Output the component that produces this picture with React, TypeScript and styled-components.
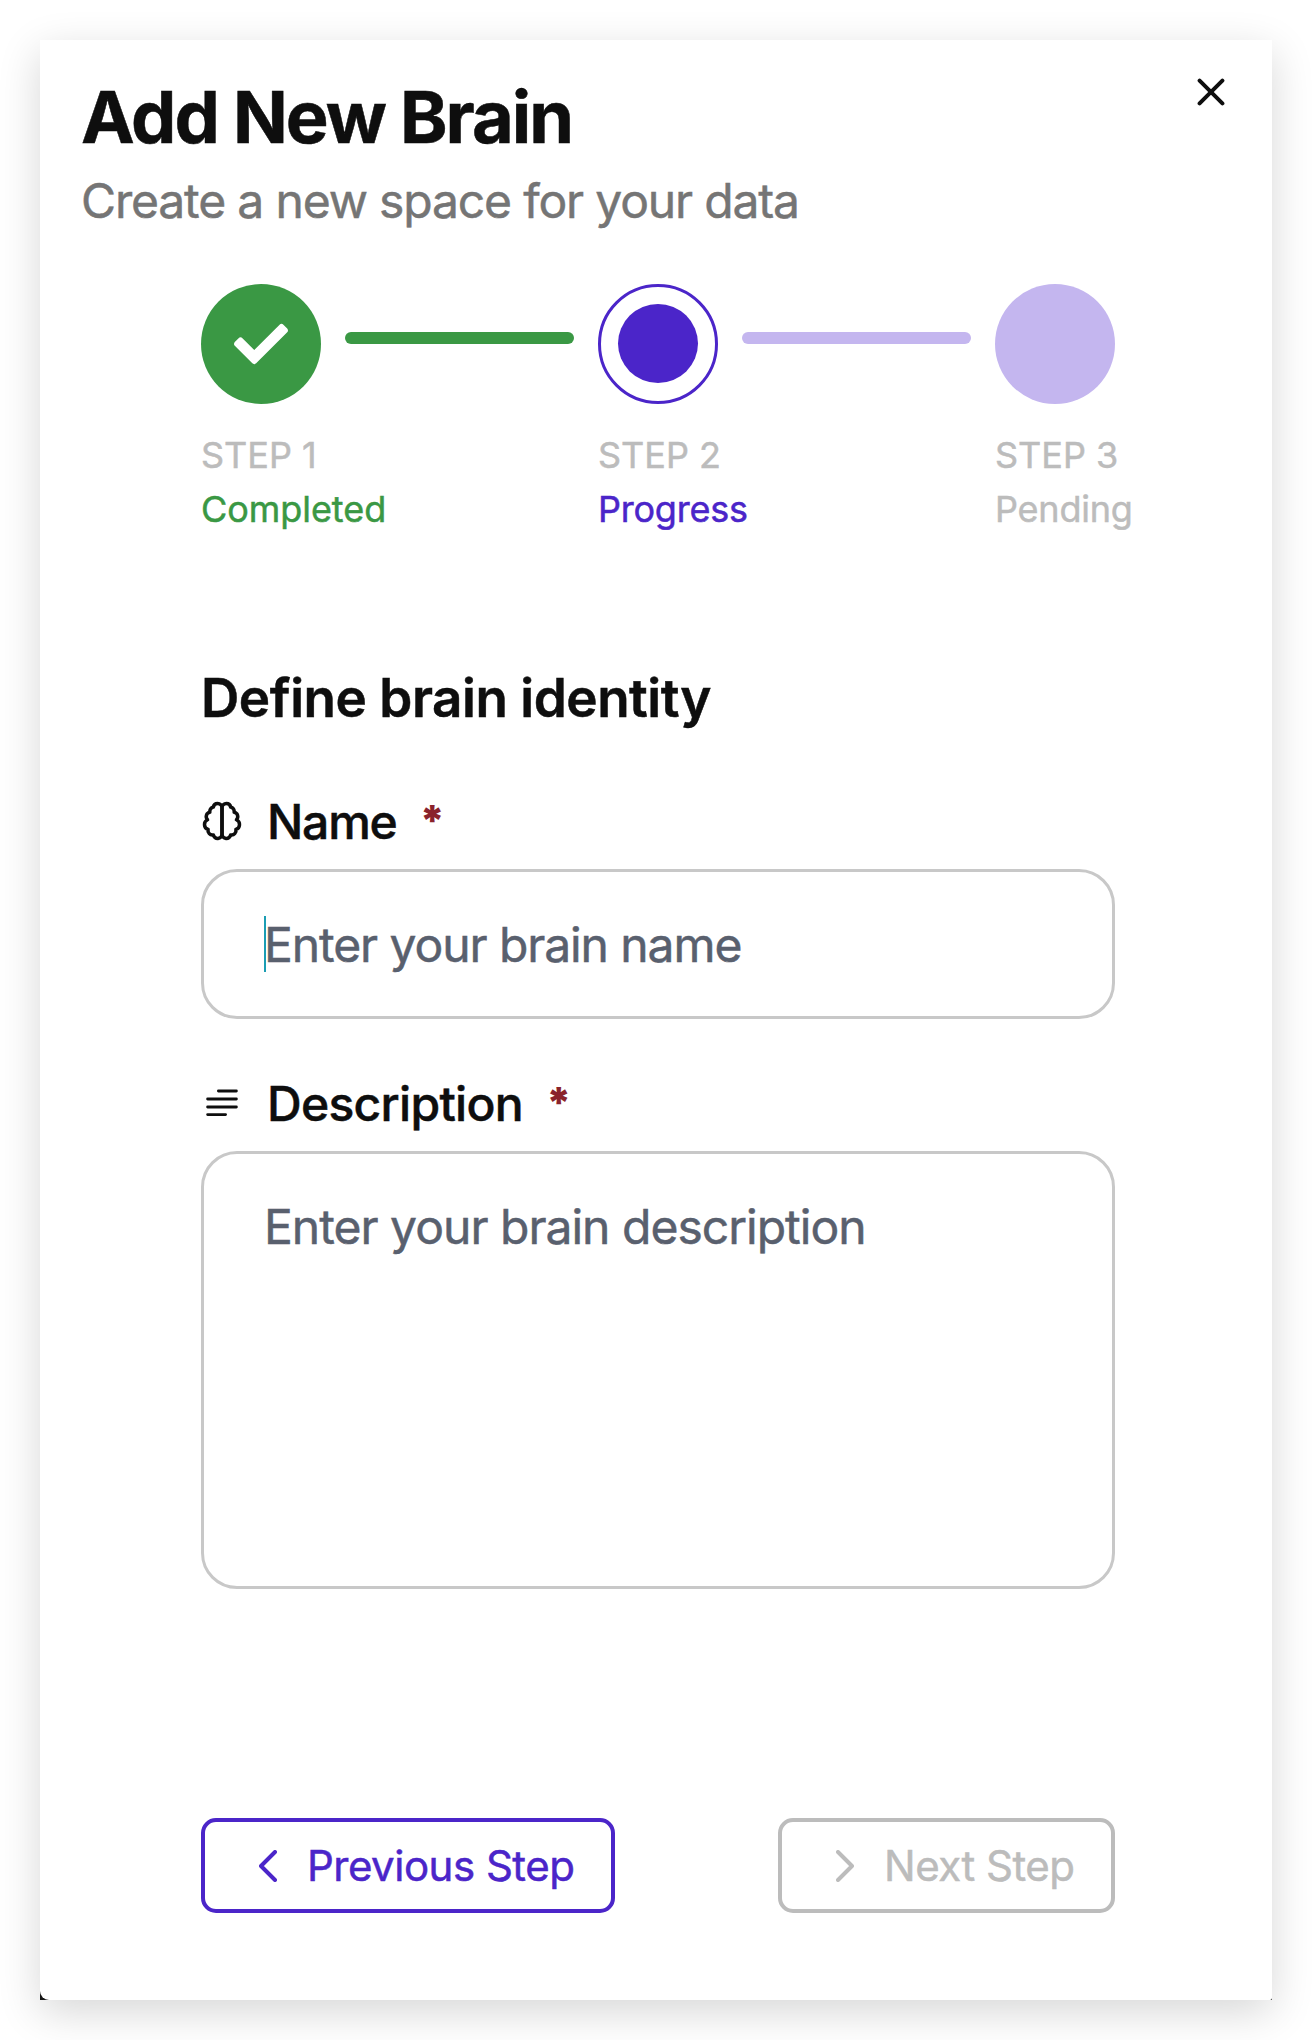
import React from "react";
import styled, { createGlobalStyle } from "styled-components";
import { FaCheck } from "react-icons/fa";

const color = {
  ink: "#0e0e0e",
  muted: "#757575",
  faint: "#bcbcbc",
  line: "#c8c8c8",
  placeholder: "#59606e",
  primary: "#4b25c9",
  primarySoft: "#c4b6ef",
  success: "#3a9844",
  danger: "#8a232c",
  caret: "#1b9db3",
};

const GlobalStyle = createGlobalStyle`
  *, *::before, *::after { box-sizing: border-box; }
  body { margin: 0; background: #fff; overflow: hidden; }
`;

const Page = styled.main`
  width: 1312px;
  height: 2040px;
  padding: 40px;
  overflow: hidden;
  font-family: Inter, "Liberation Sans", sans-serif;
  -webkit-text-stroke-width: 0.5px;
  color: ${color.ink};
`;

const Backdrop = styled.div`
  height: 1960px;
  background: #161616;
  box-shadow: 0 12px 40px rgba(0, 0, 0, 0.16);
`;

const Modal = styled.section`
  display: flex;
  flex-direction: column;
  height: 100%;
  padding-top: 41px;
  background: #fff;
  border-radius: 0 0 2px 9px;
`;

const Header = styled.header`
  display: flex;
  justify-content: space-between;
  align-items: flex-start;
  padding: 0 47px 0 41px;
`;

const Title = styled.h1`
  margin: 0;
  font-size: 72px;
  line-height: 72px;
  font-weight: 700;
  letter-spacing: -2px;
`;

const Subtitle = styled.p`
  margin: 20px 0 0;
  font-size: 48px;
  line-height: 56px;
  letter-spacing: -1.16px;
  color: ${color.muted};
`;

const CloseButton = styled.button`
  display: flex;
  margin: -3px 0 0;
  padding: 0;
  border: 0;
  background: none;
  color: inherit;
`;

const Body = styled.div`
  display: flex;
  flex-direction: column;
  width: 914px;
  margin: 55px 0 0 161px;
`;

const Stepper = styled.div`
  display: flex;
  align-items: flex-start;
`;

const Step = styled.div`
  width: 120px;
  white-space: nowrap;
  font-size: 36px;
  line-height: 54px;
`;

type Status = "done" | "current" | "pending";

const Circle = styled.div<{ $status: Status }>`
  display: flex;
  align-items: center;
  justify-content: center;
  width: 120px;
  height: 120px;
  margin-bottom: 24px;
  border-radius: 50%;
  border: ${(p) => (p.$status === "current" ? `3px solid ${color.primary}` : "0")};
  background: ${(p) =>
    p.$status === "done" ? color.success : p.$status === "pending" ? color.primarySoft : "#fff"};
  color: #fff;
`;

const Dot = styled.span`
  width: 80px;
  height: 79px;
  margin-bottom: 1px;
  border-radius: 50%;
  background: ${color.primary};
`;

const StepName = styled.div`
  color: ${color.faint};
`;

const StepStatus = styled.div<{ $status: Status }>`
  letter-spacing: ${(p) => (p.$status === "done" ? -0.05 : -0.22)}px;
  color: ${(p) =>
    p.$status === "done" ? color.success : p.$status === "current" ? color.primary : color.faint};
`;

const Bar = styled.div<{ $done?: boolean }>`
  flex: 1;
  height: 12px;
  margin: 48px 24px 0;
  border-radius: 6px;
  background: ${(p) => (p.$done ? color.success : color.primarySoft)};
`;

const SectionTitle = styled.h2`
  margin: 130px 0 63px;
  font-size: 53px;
  line-height: 64px;
  font-weight: 600;
  letter-spacing: -0.46px;
`;

const Field = styled.div`
  display: flex;
  flex-direction: column;
  gap: 18px;
  & + & {
    margin-top: 56px;
  }
`;

const Label = styled.label<{ $tracking: number }>`
  display: flex;
  align-items: center;
  gap: 24px;
  height: 58px;
  font-size: 48px;
  line-height: 58px;
  font-weight: 500;
  letter-spacing: ${(p) => p.$tracking}px;
`;

const Required = styled.span`
  margin: -2px 0 0 -1px;
  font-size: 42px;
  font-weight: 900;
  line-height: 58px;
  -webkit-text-stroke-width: 0;
  color: ${color.danger};
`;

const LabelIcon = styled.svg`
  display: block;
  flex: none;
  width: 42px;
  height: 42px;
  margin-top: -2px;
`;

const InputWrap = styled.div`
  position: relative;
  display: flex;
`;

const Caret = styled.span`
  position: absolute;
  left: 63px;
  top: 47px;
  width: 2px;
  height: 56px;
  background: ${color.caret};
`;

const Input = styled.input`
  width: 100%;
  height: 150px;
  padding: 0 60px;
  border: 3px solid ${color.line};
  border-radius: 36px;
  outline: none;
  background: #fff;
  font: 400 48px/58px Inter, "Liberation Sans", sans-serif;
  letter-spacing: -1.08px;
  &::placeholder {
    color: ${color.placeholder};
    opacity: 1;
  }
`;

const TextArea = styled.textarea`
  display: block;
  width: 100%;
  height: 438px;
  padding: 44px 60px;
  border: 3px solid ${color.line};
  border-radius: 36px;
  outline: none;
  resize: none;
  background: #fff;
  font: 400 48px/58px Inter, "Liberation Sans", sans-serif;
  letter-spacing: -0.98px;
  &::placeholder {
    color: ${color.placeholder};
    opacity: 1;
  }
`;

const Footer = styled.footer`
  display: flex;
  justify-content: space-between;
  margin-top: 229px;
`;

const StepButton = styled.button<{ $width: number; $tone: string }>`
  display: flex;
  align-items: center;
  gap: 30px;
  width: ${(p) => p.$width}px;
  height: 95px;
  padding: 0 0 0 54px;
  border: 4px solid ${(p) => p.$tone};
  border-radius: 15px;
  background: #fff;
  color: ${(p) => p.$tone};
  font: 400 42px/50px Inter, "Liberation Sans", sans-serif;
  letter-spacing: -0.5px;
  white-space: nowrap;
`;

const Chevron = ({ right }: { right?: boolean }) => (
  <svg width="18" height="32" viewBox="0 0 18 32" fill="none" stroke="currentColor" strokeWidth="4" strokeLinecap="round" strokeLinejoin="round">
    <path d={right ? "M2 2l14 14L2 30" : "M16 2L2 16l14 14"} />
  </svg>
);

const BrainIcon = () => (
  <LabelIcon viewBox="0 0 24 24" fill="none" stroke="currentColor" strokeWidth="2" strokeLinecap="round" strokeLinejoin="round">
    <path d="M9.5 2A2.5 2.5 0 0 1 12 4.5v15a2.5 2.5 0 0 1-4.96.44 2.5 2.5 0 0 1-2.96-3.08 3 3 0 0 1-.34-5.58 2.5 2.5 0 0 1 1.32-4.24 2.5 2.5 0 0 1 1.98-3A2.5 2.5 0 0 1 9.5 2Z" />
    <path d="M14.5 2A2.5 2.5 0 0 0 12 4.5v15a2.5 2.5 0 0 0 4.96.44 2.5 2.5 0 0 0 2.96-3.08 3 3 0 0 0 .34-5.58 2.5 2.5 0 0 0-1.32-4.24 2.5 2.5 0 0 0-1.98-3A2.5 2.5 0 0 0 14.5 2Z" />
  </LabelIcon>
);

const ParagraphIcon = () => (
  <LabelIcon viewBox="0 0 42 42" fill="none" stroke="currentColor" strokeWidth="2.8" strokeLinecap="round">
    <path d="M17.4 9H35.4M6.6 17H35.4M6.6 25H35.4M6.6 32.6H24.6" />
  </LabelIcon>
);

export default function App() {
  return (
    <Page>
      <GlobalStyle />
      <Backdrop>
        <Modal>
          <Header>
            <div>
              <Title>Add New Brain</Title>
              <Subtitle>Create a new space for your data</Subtitle>
            </div>
            <CloseButton aria-label="Close">
              <svg width="28" height="28" viewBox="0 0 28 28" fill="none" stroke="currentColor" strokeWidth="4" strokeLinecap="round">
                <path d="M2.6 2.6l22.8 22.8M25.4 2.6L2.6 25.4" />
              </svg>
            </CloseButton>
          </Header>
          <Body>
            <Stepper>
              <Step>
                <Circle $status="done">
                  <FaCheck size={54} />
                </Circle>
                <StepName>STEP 1</StepName>
                <StepStatus $status="done">Completed</StepStatus>
              </Step>
              <Bar $done />
              <Step>
                <Circle $status="current">
                  <Dot />
                </Circle>
                <StepName>STEP 2</StepName>
                <StepStatus $status="current">Progress</StepStatus>
              </Step>
              <Bar />
              <Step>
                <Circle $status="pending" />
                <StepName>STEP 3</StepName>
                <StepStatus $status="pending">Pending</StepStatus>
              </Step>
            </Stepper>
            <SectionTitle>Define brain identity</SectionTitle>
            <Field>
              <Label htmlFor="name" $tracking={-1.2}>
                <BrainIcon />
                <span>Name</span>
                <Required>*</Required>
              </Label>
              <InputWrap>
                <Input id="name" placeholder="Enter your brain name" />
                <Caret />
              </InputWrap>
            </Field>
            <Field>
              <Label htmlFor="description" $tracking={-0.7}>
                <ParagraphIcon />
                <span>Description</span>
                <Required>*</Required>
              </Label>
              <TextArea id="description" placeholder="Enter your brain description" />
            </Field>
            <Footer>
              <StepButton $width={414} $tone={color.primary}>
                <Chevron />
                Previous Step
              </StepButton>
              <StepButton $width={337} $tone={color.faint} disabled>
                <Chevron right />
                Next Step
              </StepButton>
            </Footer>
          </Body>
        </Modal>
      </Backdrop>
    </Page>
  );
}
